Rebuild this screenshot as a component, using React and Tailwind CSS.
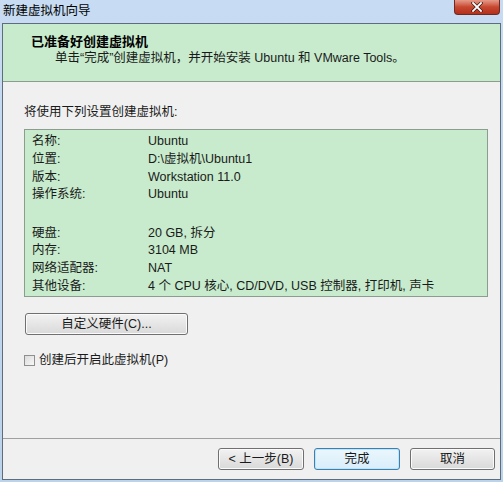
import React from 'react';

const rows = [
  ['名称:', 'Ubuntu'],
  ['位置:', 'D:\\虚拟机\\Ubuntu1'],
  ['版本:', 'Workstation 11.0'],
  ['操作系统:', 'Ubuntu'],
  null,
  ['硬盘:', '20 GB, 拆分'],
  ['内存:', '3104 MB'],
  ['网络适配器:', 'NAT'],
  ['其他设备:', '4 个 CPU 核心, CD/DVD, USB 控制器, 打印机, 声卡'],
];

const font = { fontFamily: '"Liberation Sans", "Noto Sans CJK SC", sans-serif' };

const WinButton = ({ children, className = '', primary = false }) => (
  <button
    className={`h-[22px] rounded-[3px] border text-[12.5px] text-[#1a1a1a] bg-gradient-to-b ${
      primary
        ? 'border-[#3c7fb1] from-[#eaf6fd] to-[#d9eefa] shadow-[inset_0_0_0_1px_#bfe4f7]'
        : 'border-[#707070] from-[#f2f2f2] to-[#d9d9d9] shadow-[inset_0_0_0_1px_#fbfbfb]'
    } ${className}`}
  >
    {children}
  </button>
);

export default function App() {
  return (
    <div className="w-[503px] h-[482px] bg-gradient-to-b from-[#c7dcf2] to-[#bcd3ec] flex flex-col" style={font}>
      {/* title bar */}
      <div className="h-[23px] flex items-start justify-between shrink-0">
        <span className="pl-[3px] pt-[3px] text-[12.5px] leading-[16px] text-black">新建虚拟机向导</span>
        <div className="mr-[3px] w-[46px] h-[15px] rounded-b-[4px] border border-t-0 border-[#6e2a22] bg-gradient-to-b from-[#e59a8a] via-[#c7472f] to-[#b4301c] flex items-center justify-center">
          <svg width="12" height="10" viewBox="0 0 12 10">
            <path d="M2 1 L10 9 M10 1 L2 9" stroke="#3b1510" strokeWidth="3.2" strokeLinecap="square" />
            <path d="M2 1 L10 9 M10 1 L2 9" stroke="#ffffff" strokeWidth="1.8" strokeLinecap="square" />
          </svg>
        </div>
      </div>

      {/* client area */}
      <div className="mx-[2px] mb-[2px] flex-1 border border-[#5d6d7e] bg-[#f0f0f0] flex flex-col">
        {/* header */}
        <div className="h-[58px] bg-[#c7ebcc] border-b border-[#8c9c8f] pl-[28px] pt-[9px] shrink-0">
          <div className="text-[13px] font-bold leading-[17px] text-black">已准备好创建虚拟机</div>
          <div className="pl-[24px] text-[12.5px] leading-[17px] text-[#1a1a1a]">
            单击“完成”创建虚拟机，并开始安装 Ubuntu 和 VMware Tools。
          </div>
        </div>

        {/* body */}
        <div className="flex-1 flex flex-col pl-[21px] pr-[10px]">
          <div className="pt-[22px] text-[12.5px] leading-[16px] text-[#1a1a1a]">将使用下列设置创建虚拟机:</div>
          <div className="mt-[9px] w-[464px] h-[168px] bg-[#c7ebcc] border border-[#8c9c8f] pl-[7px] pt-[3px]">
            {rows.map((r, i) =>
              r ? (
                <div key={i} className="flex h-[17.6px] items-center text-[12.5px] text-[#1a1a1a]">
                  <span className="w-[116px] shrink-0">{r[0]}</span>
                  <span>{r[1]}</span>
                </div>
              ) : (
                <div key={i} className="h-[21px]" />
              )
            )}
          </div>
          <WinButton className="mt-[16px] ml-[1px] w-[163px]">自定义硬件(C)...</WinButton>
          <label className="mt-[16px] flex items-center gap-[4px] text-[12.5px] text-[#1a1a1a]">
            <span className="w-[11px] h-[11px] border border-[#8e8f8f] bg-gradient-to-br from-[#dcdcdc] to-[#f7f7f7]" />
            创建后开启此虚拟机(P)
          </label>
        </div>

        {/* footer */}
        <div className="h-[41px] border-t border-[#a0a0a0] flex items-start justify-end gap-[10px] pt-[9px] pr-[5px] shrink-0">
          <WinButton className="w-[86px]">&lt; 上一步(B)</WinButton>
          <WinButton primary className="w-[86px]">完成</WinButton>
          <WinButton className="w-[85px]">取消</WinButton>
        </div>
      </div>
    </div>
  );
}
